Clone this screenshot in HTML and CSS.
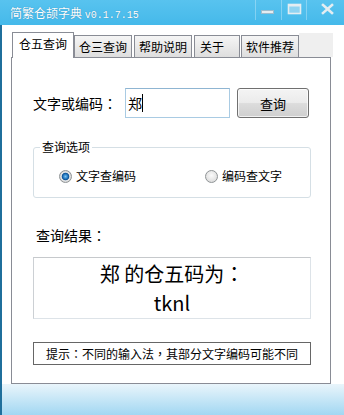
FILE: index.html
```html
<!DOCTYPE html>
<html>
<head>
  <title>简繁仓颉字典</title>
  <link rel="stylesheet" href="styles.css">
</head>
<body>
  <div class="window">
    <div class="titlebar">
      <span class="title">简繁仓颉字典 <span class="version">v0.1.7.15</span></span>
      <div class="controls">
        <span class="ctl ctl-min">
          <svg width="25" height="20" viewBox="0 0 25 20"><rect x="5.5" y="10.5" width="12" height="3" fill="#e4edf2" stroke="#9dbccd" stroke-width="1"/></svg>
        </span>
        <span class="ctl ctl-max">
          <svg width="24" height="20" viewBox="0 0 24 20"><rect x="6.5" y="4.5" width="12" height="9" fill="#8fd3f1" stroke="#e4edf2" stroke-width="1.6"/><line x1="6" y1="5.5" x2="19" y2="5.5" stroke="#e4edf2" stroke-width="2"/></svg>
        </span>
        <span class="ctl ctl-close">
          <svg width="37" height="20" viewBox="0 0 37 20"><path d="M16 5 L25 13 M25 5 L16 13" stroke="#e4edf2" stroke-width="2.6" stroke-linecap="square"/></svg>
        </span>
      </div>
    </div>

    <div class="client">
      <div class="tabs">
        <span class="tab active">仓五查询</span>
        <span class="tab tab-2">仓三查询</span>
        <span class="tab tab-3">帮助说明</span>
        <span class="tab tab-4">关于</span>
        <span class="tab tab-5">软件推荐</span>
        <span class="tab-fill"></span>
      </div>

      <div class="panel">
        <div class="query-row">
          <label class="query-label">文字或编码<span class="punct">：</span></label>
          <div class="textbox">郑<span class="caret"></span></div>
          <button class="btn">查询</button>
        </div>

        <fieldset class="options">
          <legend>查询选项</legend>
          <div class="radios">
            <label class="radio"><input type="radio" name="mode" checked>文字查编码</label>
            <label class="radio"><input type="radio" name="mode">编码查文字</label>
          </div>
        </fieldset>

        <div class="result-label">查询结果<span class="punct">：</span></div>
        <div class="result">
          <div>郑 的仓五码为<span class="punct">：</span></div>
          <div>tknl</div>
        </div>

        <div class="hint">提示<span class="punct">：</span>不同的输入法<span class="punct">，</span>其部分文字编码可能不同</div>
      </div>
    </div>

    <div class="statusbar"></div>
  </div>
</body>
</html>
```

FILE: styles.css
```css
html, body {
  padding: 0;
  margin: 0;
}

body {
  background: #fff;
  font-family: "Noto Sans CJK SC", "Noto Sans", sans-serif;
  color: #000;
}

.punct {
  font-family: "Noto Sans CJK TC", "Noto Sans CJK SC", sans-serif;
}

.window {
  width: 344px;
  height: 415px;
  display: flex;
  flex-direction: column;
}

/* title bar */
.titlebar {
  height: 25px;
  flex: none;
  display: flex;
  justify-content: space-between;
  background: linear-gradient(#58c3ef, #45b9ea);
}

.title {
  padding-left: 10px;
  line-height: 25px;
  font-size: 12px;
  color: #fff;
  text-shadow: 0 0 1px rgba(30, 90, 130, 0.6);
}

.version {
  font-family: "Liberation Mono", monospace;
  font-size: 10px;
}

.controls {
  display: flex;
  height: 20px;
}

.ctl {
  display: block;
  height: 20px;
  border-left: 1px solid rgba(255, 255, 255, 0.3);
}
.ctl svg {
  display: block;
}

/* client area */
.client {
  flex: 1;
  display: flex;
  flex-direction: column;
  border-left: 2px solid #1f6f9c;
  padding: 7px 11px 0 9px;
}

.tabs {
  height: 25px;
  display: flex;
  align-items: flex-end;
}

.tab {
  box-sizing: border-box;
  height: 22px;
  width: 58px;
  border: 1px solid #898c95;
  border-bottom: 0;
  background: linear-gradient(#f5f5f5, #dedede);
  font-size: 12px;
  line-height: 21px;
  text-align: center;
}

.tab.active {
  height: 26px;
  width: 62px;
  margin-left: 1px;
  margin-bottom: -1px;
  background: #fff;
  line-height: 22px;
  position: relative;
  z-index: 1;
}

.tab-3,
.tab-4 {
  margin-left: 2px;
}
.tab-4 {
  width: 46px;
  text-align: left;
  padding-left: 5px;
}
.tab-5 {
  margin-left: 1px;
}

.tab-fill {
  flex: 1;
  height: 24px;
  background: #efefef;
}

.panel {
  flex: 1;
  display: flex;
  flex-direction: column;
  border: 1px solid #898c95;
  margin-right: 2px;
  padding: 0 19px 0 21px;
}

/* query row */
.query-row {
  margin-top: 30px;
  height: 30px;
  display: flex;
  align-items: center;
}

.query-label {
  width: 92px;
  font-size: 14px;
}

.textbox {
  box-sizing: border-box;
  width: 105px;
  height: 30px;
  border: 1px solid #a9cbe3;
  border-top-color: #8fb5d2;
  padding-left: 2px;
  font-size: 14px;
  line-height: 28px;
  display: flex;
  align-items: center;
}

.caret {
  display: block;
  width: 1px;
  height: 18px;
  background: #000;
}

.btn {
  box-sizing: border-box;
  margin-left: 7px;
  width: 72px;
  height: 30px;
  border: 1px solid #707070;
  border-radius: 3px;
  background: linear-gradient(#f4f4f4 0%, #ebebeb 48%, #dcdcdc 52%, #cfcfcf 100%);
  box-shadow: inset 0 0 0 1px rgba(255, 255, 255, 0.7);
  font-family: inherit;
  font-size: 13px;
  padding: 0;
}

/* options group */
.options {
  margin: 22px 0 0;
  padding: 0 0 0 6px;
  border: 1px solid #d5dfe5;
  border-radius: 3px;
}

.options legend {
  padding: 0 2px;
  font-size: 12px;
  line-height: 14px;
}

.radios {
  display: flex;
  gap: 69px;
  padding: 15px 0 14px 19px;
}

.radio {
  display: flex;
  align-items: center;
  font-size: 12px;
  line-height: 14px;
}

.radio input {
  appearance: none;
  box-sizing: border-box;
  width: 13px;
  height: 13px;
  margin: 0 4px 0 0;
  border: 1px solid #8f9496;
  border-radius: 50%;
  background: radial-gradient(circle at 50% 40%, #fbfbfb, #d4d4d4);
}

.radio input:checked {
  background: radial-gradient(circle at 50% 50%, #7cc3f0 0, #1e73bd 2.5px, #0d4f8f 3.4px, #e8e8e8 4.2px, #d0d0d0 6px);
}

/* result */
.result-label {
  margin-top: 27px;
  padding-left: 3px;
  font-size: 14px;
  line-height: 20px;
}

.result {
  box-sizing: border-box;
  margin-top: 12px;
  height: 62px;
  border: 1px solid #dde3e8;
  border-top-color: #c6c9cc;
  border-left-color: #ccd0d4;
  padding-top: 1px;
  text-align: center;
  font-size: 20px;
  line-height: 29px;
}

.hint {
  box-sizing: border-box;
  margin-top: 23px;
  height: 23px;
  border: 1px solid #666;
  padding-left: 12px;
  font-size: 12px;
  line-height: 21px;
}

.statusbar {
  height: 31px;
  flex: none;
  border-left: 2px solid #1f6f9c;
  background: linear-gradient(#e9f5fb, #a2d7f2);
}
```
